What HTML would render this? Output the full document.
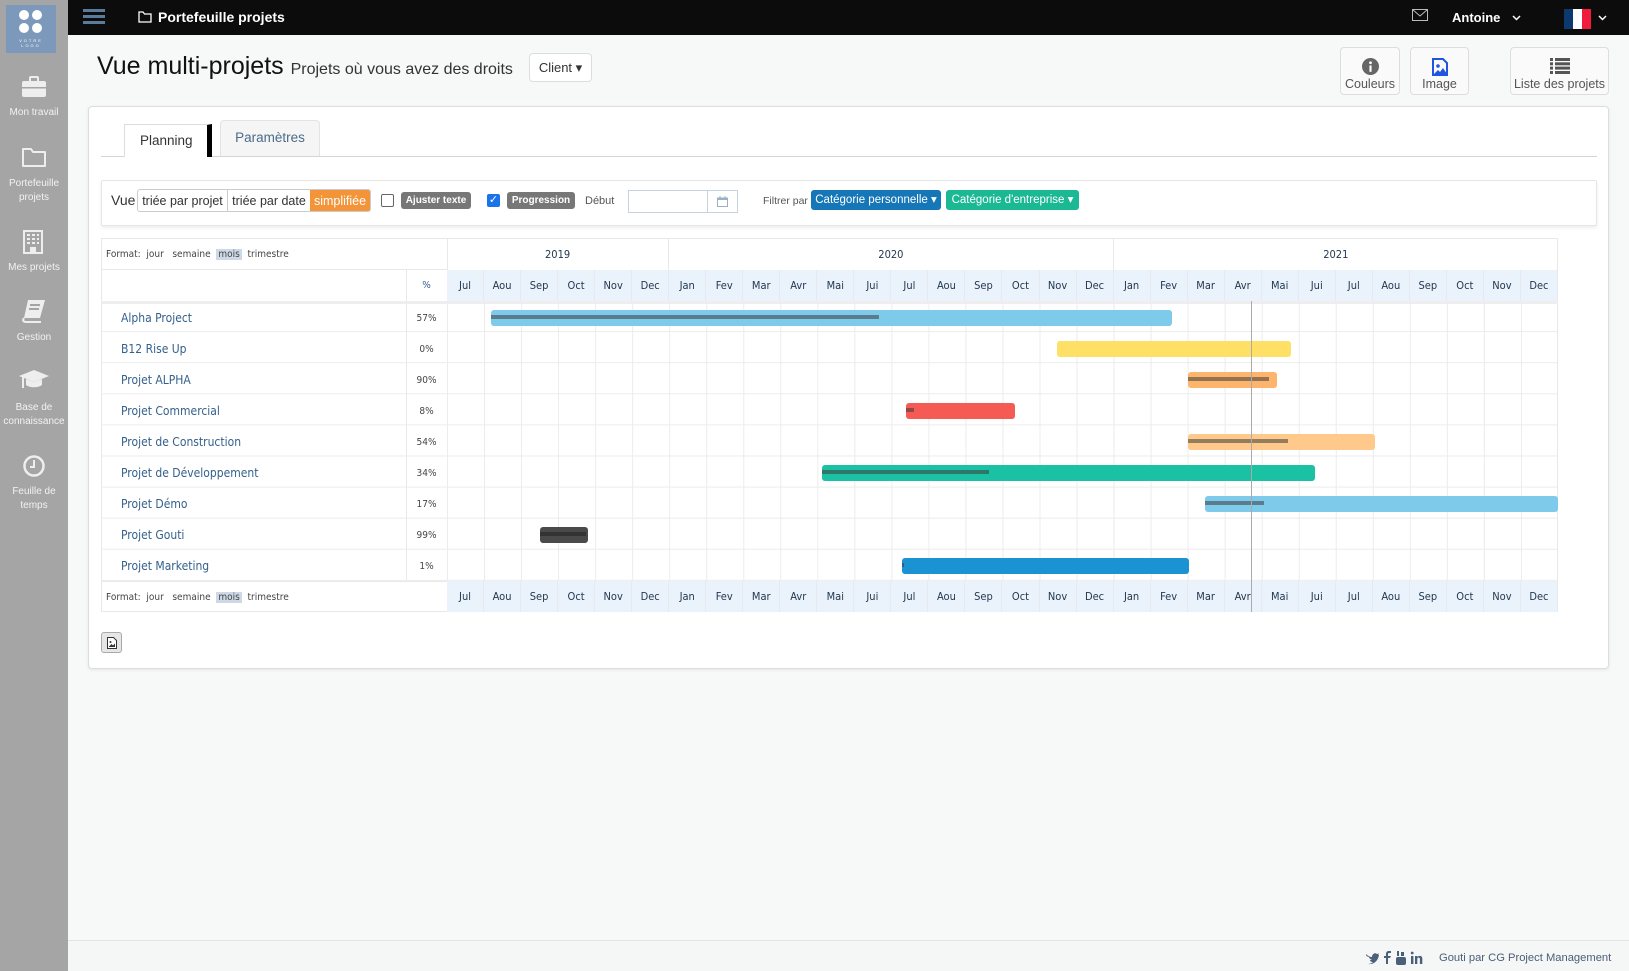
<!DOCTYPE html>
<html><head><meta charset="utf-8">
<style>
*{box-sizing:border-box;margin:0;padding:0}
body{width:1629px;height:971px;overflow:hidden;background:#f7f8f8;font-family:"Liberation Sans",sans-serif;position:relative;color:#333}
.abs{position:absolute}
#side{left:0;top:0;width:68px;height:971px;background:#a5a5a5}
.sl{position:absolute;left:0;width:68px;text-align:center;color:#f2f2f2;font-size:10px;line-height:14px}
#top{left:68px;top:0;width:1561px;height:35px;background:#0c0c0c}
.btn{position:absolute;background:#fafafa;border:1px solid #ddd;border-radius:4px;text-align:center;font-size:12.5px;color:#555}
.gw{font-family:"DejaVu Sans Condensed","DejaVu Sans",sans-serif}
.mrow{position:absolute;left:447px;width:1111px;height:31px;display:flex;background:#eaf2fb}
.mrow span{width:37.033px;text-align:center;font-size:11px;line-height:31px;color:#23384f;border-right:1px solid #e4eaf0}
.name{position:absolute;left:121px;font-size:12px;color:#34608c;line-height:31px}
.pct{position:absolute;left:406px;width:41px;text-align:center;font-size:10px;color:#444;line-height:31px}
.bar{position:absolute;height:16px;border-radius:3px}
.pg{position:absolute;left:0;top:5px;height:4px;background:rgba(60,60,60,.55)}
.fmt{font-size:10px;color:#444}
.fmt b{font-weight:normal;background:#cdd9e6;padding:0 2px}
</style></head><body>

<div id="side" class="abs">
 <div class="abs" style="left:6px;top:5px;width:50px;height:48px;background:#7c98bb">
  <div class="abs" style="left:13px;top:5px;width:10px;height:10px;border-radius:50%;background:#fff"></div>
  <div class="abs" style="left:26px;top:5px;width:10px;height:10px;border-radius:50%;background:#fff"></div>
  <div class="abs" style="left:13px;top:18px;width:10px;height:10px;border-radius:50%;background:#fff"></div>
  <div class="abs" style="left:26px;top:18px;width:10px;height:10px;border-radius:50%;background:#fff"></div>
  <div class="abs" style="left:0;top:33px;width:50px;text-align:center;font-size:4px;color:#fff;letter-spacing:2px;line-height:5px">VOTRE<br>LOGO</div>
 </div>
 <svg class="abs" style="left:21px;top:76px" width="26" height="22" viewBox="0 0 26 22"><rect x="1" y="5" width="24" height="16" rx="2" fill="#eee"/><rect x="9" y="1" width="8" height="5" rx="1" fill="none" stroke="#eee" stroke-width="2"/><rect x="1" y="11" width="24" height="1.5" fill="#a5a5a5"/></svg>
 <div class="sl" style="top:106px">Mon travail</div>
 <svg class="abs" style="left:21px;top:146px" width="26" height="22" viewBox="0 0 26 22"><path d="M2 3h8l2 3h12v14H2z" fill="none" stroke="#eee" stroke-width="2" stroke-linejoin="round"/></svg>
 <div class="sl" style="top:177px">Portefeuille<br>projets</div>
 <svg class="abs" style="left:23px;top:230px" width="20" height="24" viewBox="0 0 20 24"><rect x="1" y="1" width="18" height="22" fill="none" stroke="#eee" stroke-width="2"/><g fill="#eee"><rect x="4" y="4" width="3" height="2"/><rect x="9" y="4" width="3" height="2"/><rect x="14" y="4" width="2" height="2"/><rect x="4" y="8" width="3" height="2"/><rect x="9" y="8" width="3" height="2"/><rect x="14" y="8" width="2" height="2"/><rect x="4" y="12" width="3" height="2"/><rect x="9" y="12" width="3" height="2"/><rect x="14" y="12" width="2" height="2"/><rect x="7" y="17" width="6" height="6"/></g></svg>
 <div class="sl" style="top:261px">Mes projets</div>
 <svg class="abs" style="left:21px;top:299px" width="26" height="24" viewBox="0 0 26 24"><path d="M7 1h17l-5 18H3z" fill="#eee"/><path d="M3 19c-2 3 0 4 2 4h15" fill="none" stroke="#eee" stroke-width="2"/><rect x="9" y="5" width="10" height="2" fill="#a5a5a5"/><rect x="8" y="9" width="10" height="2" fill="#a5a5a5"/></svg>
 <div class="sl" style="top:331px">Gestion</div>
 <svg class="abs" style="left:18px;top:368px" width="32" height="24" viewBox="0 0 32 24"><path d="M1 8L16 2l15 6-15 6z" fill="#eee"/><path d="M8 11v6c4 3 12 3 16 0v-6l-8 3z" fill="#eee"/><path d="M5 9v11" stroke="#eee" stroke-width="2"/></svg>
 <div class="sl" style="top:401px">Base de<br>connaissance</div>
 <svg class="abs" style="left:22px;top:454px" width="24" height="24" viewBox="0 0 24 24"><circle cx="12" cy="12" r="9.5" fill="none" stroke="#eee" stroke-width="2.5"/><path d="M12 6v7h-4" fill="none" stroke="#eee" stroke-width="2"/></svg>
 <div class="sl" style="top:485px">Feuille de<br>temps</div>
</div>

<div id="top" class="abs">
 <div class="abs" style="left:15px;top:9px;width:22px;height:3px;background:#5b7b9b;box-shadow:0 6px 0 #5b7b9b,0 12px 0 #5b7b9b"></div>
 <svg class="abs" style="left:70px;top:11px" width="14" height="12" viewBox="0 0 14 12"><path d="M1 1h4l1.5 2H13v8H1z" fill="none" stroke="#fff" stroke-width="1.3"/></svg>
 <div class="abs" style="left:90px;top:9px;color:#fff;font-weight:bold;font-size:14px">Portefeuille projets</div>
 <svg class="abs" style="left:1344px;top:9px" width="16" height="12" viewBox="0 0 16 12"><rect x=".5" y=".5" width="15" height="11" fill="none" stroke="#bbb"/><path d="M.5 .5L8 7l7.5-6.5" fill="none" stroke="#bbb"/></svg>
 <div class="abs" style="left:1384px;top:10px;color:#fff;font-weight:bold;font-size:13px">Antoine</div>
 <svg class="abs" style="left:1444px;top:15px" width="9" height="6" viewBox="0 0 9 6"><path d="M1 1l3.5 3.5L8 1" fill="none" stroke="#fff" stroke-width="1.5"/></svg>
 <div class="abs" style="left:1496px;top:9px;width:27px;height:20px;background:linear-gradient(90deg,#0d3a6e 33%,#fff 33%,#fff 66%,#ef1c3c 66%)"></div>
 <svg class="abs" style="left:1530px;top:15px" width="9" height="6" viewBox="0 0 9 6"><path d="M1 1l3.5 3.5L8 1" fill="none" stroke="#fff" stroke-width="1.5"/></svg>
</div>

<div class="abs" style="left:97px;top:52px;font-size:25px;color:#111">Vue multi-projets <span style="font-size:16px;color:#333">Projets où vous avez des droits</span></div>
<div class="btn" style="left:529px;top:53px;width:63px;height:29px;background:#fff;line-height:27px;color:#333;font-size:13px">Client &#9662;</div>

<div class="btn" style="left:1340px;top:47px;width:60px;height:48px">
 <svg style="margin-top:10px" width="17" height="17" viewBox="0 0 16 16"><circle cx="8" cy="8" r="8" fill="#666"/><rect x="7" y="7" width="2" height="6" fill="#fff"/><circle cx="8" cy="4.5" r="1.3" fill="#fff"/></svg>
 <div style="margin-top:-1px">Couleurs</div></div>
<div class="btn" style="left:1410px;top:47px;width:59px;height:48px">
 <svg style="margin-top:10px" width="16" height="18" viewBox="0 0 16 18"><path d="M1 1h10l4 4v12H1z" fill="none" stroke="#1f55e0" stroke-width="2"/><circle cx="6" cy="8" r="1.8" fill="#1f55e0"/><path d="M2 16l4-4 2 2 3-4 4 6z" fill="#1f55e0"/></svg>
 <div style="margin-top:-2px">Image</div></div>
<div class="btn" style="left:1510px;top:47px;width:99px;height:48px">
 <svg style="margin-top:10px" width="20" height="16" viewBox="0 0 20 16"><g fill="#555"><rect x="0" y="0" width="3" height="3"/><rect x="5" y="0" width="15" height="3"/><rect x="0" y="4.3" width="3" height="3"/><rect x="5" y="4.3" width="15" height="3"/><rect x="0" y="8.6" width="3" height="3"/><rect x="5" y="8.6" width="15" height="3"/><rect x="0" y="13" width="3" height="3"/><rect x="5" y="13" width="15" height="3"/></g></svg>
 <div style="margin-top:0px">Liste des projets</div></div>

<div class="abs" style="left:88px;top:106px;width:1521px;height:563px;background:#fff;border:1px solid #ddd;border-radius:4px;box-shadow:0 1px 3px rgba(0,0,0,.08)"></div>
<div class="abs" style="left:101px;top:156px;width:1496px;height:1px;background:#d5d5d5"></div>
<div class="abs" style="left:124px;top:124px;width:88px;height:33px;background:#fff;border:1px solid #ddd;border-bottom:none;border-right:5px solid #000;font-size:13.5px;line-height:32px;padding-left:15px;color:#333">Planning</div>
<div class="abs" style="left:220px;top:120px;width:100px;height:36px;background:#f5f5f5;border:1px solid #e3e3e3;border-bottom:none;border-radius:4px 4px 0 0;font-size:13.5px;line-height:34px;text-align:center;color:#4a6b8a">Paramètres</div>

<div class="abs" style="left:101px;top:180px;width:1496px;height:46px;background:#fff;border:1px solid #e6e6e6;border-radius:2px;box-shadow:0 2px 3px rgba(0,0,0,.07)"></div>
<div class="abs" style="left:111px;top:192px;font-size:14px;color:#333">Vue</div>
<div class="abs" style="left:137px;top:189px;width:234px;height:23px;border:1px solid #ccc;border-radius:3px;display:flex;font-size:12.5px;line-height:22px;background:#fff;overflow:hidden">
 <div style="width:90px;text-align:center;border-right:1px solid #ccc">triée par projet</div>
 <div style="width:82px;text-align:center">triée par date</div>
 <div style="flex:1;text-align:center;background:#f29437;color:#fff">simplifiée</div>
</div>
<div class="abs" style="left:381px;top:194px;width:13px;height:13px;border:1px solid #666;border-radius:2px;background:#fff"></div>
<div class="abs" style="left:401px;top:192px;width:70px;height:17px;background:#777;border-radius:3px;color:#fff;font-size:10px;font-weight:bold;text-align:center;line-height:17px">Ajuster texte</div>
<div class="abs" style="left:487px;top:194px;width:13px;height:13px;border-radius:2px;background:#1a73e8;color:#fff;font-size:11px;line-height:13px;text-align:center">✓</div>
<div class="abs" style="left:507px;top:192px;width:68px;height:17px;background:#777;border-radius:3px;color:#fff;font-size:10px;font-weight:bold;text-align:center;line-height:17px">Progression</div>
<div class="abs" style="left:585px;top:195px;font-size:11px;color:#555">Début</div>
<div class="abs" style="left:628px;top:190px;width:110px;height:23px;border:1px solid #c8d3df;background:#fff"><div class="abs" style="left:78px;top:0;width:1px;height:21px;background:#c8d3df"></div>
 <svg class="abs" style="left:88px;top:5px" width="11" height="11" viewBox="0 0 11 11"><rect x=".5" y="2" width="10" height="8.5" fill="none" stroke="#9bb0c6"/><rect x=".5" y="2" width="10" height="2" fill="#9bb0c6"/><rect x="2.5" y="0" width="1" height="3" fill="#9bb0c6"/><rect x="7.5" y="0" width="1" height="3" fill="#9bb0c6"/></svg></div>
<div class="abs" style="left:763px;top:195px;font-size:10.5px;color:#555">Filtrer par</div>
<div class="abs" style="left:811px;top:190px;width:130px;height:20px;background:#1677b8;border-radius:3px;color:#fff;font-size:11.5px;line-height:20px;text-align:center">Catégorie personnelle &#9662;</div>
<div class="abs" style="left:946px;top:190px;width:133px;height:20px;background:#1bb894;border-radius:3px;color:#fff;font-size:11.5px;line-height:20px;text-align:center">Catégorie d'entreprise &#9662;</div>

<!-- Gantt -->
<div class="gw">
<div class="abs" style="left:101px;top:238px;width:1457px;height:374px;border:1px solid #e8e8e8;background:#fff"></div>
<div class="abs" style="left:447px;top:238px;width:1px;height:374px;background:#e8e8e8"></div>
<div class="abs" style="left:406px;top:269px;width:1px;height:311px;background:#e8e8e8"></div>
<div class="abs" style="left:101px;top:269px;width:346px;height:1px;background:#e8e8e8"></div>
<div class="abs fmt" style="left:106px;top:249px">Format:&nbsp; jour &nbsp; semaine &nbsp;<b>mois</b>&nbsp; trimestre</div>
<div class="abs" style="left:447px;top:239px;width:1111px;height:31px;display:flex;font-size:11px;line-height:31px;color:#23384f;text-align:center">
 <div style="width:222.2px;border-right:1px solid #e8e8e8">2019</div>
 <div style="width:444.4px;border-right:1px solid #e8e8e8">2020</div>
 <div style="flex:1">2021</div>
</div>
<div class="pct" style="top:270px;color:#34608c">%</div>
<div class="mrow" style="top:270px"><span>Jul</span><span>Aou</span><span>Sep</span><span>Oct</span><span>Nov</span><span>Dec</span><span>Jan</span><span>Fev</span><span>Mar</span><span>Avr</span><span>Mai</span><span>Jui</span><span>Jul</span><span>Aou</span><span>Sep</span><span>Oct</span><span>Nov</span><span>Dec</span><span>Jan</span><span>Fev</span><span>Mar</span><span>Avr</span><span>Mai</span><span>Jui</span><span>Jul</span><span>Aou</span><span>Sep</span><span>Oct</span><span>Nov</span><span>Dec</span></div>
<div class="abs" style="left:101px;top:301px;width:1457px;height:3px;background:#eee"></div>
<div class="abs" style="left:447px;top:301px;width:1111px;height:280px;background-image:linear-gradient(to right,#ececec 1px,transparent 1px);background-size:37.033px 100%"></div>
<div class="abs" style="left:101px;top:301px;width:1457px;height:280px;background-image:linear-gradient(to bottom,transparent 30px,#ececec 30px);background-size:100% 31.1px"></div>

<div class="name" style="top:303px">Alpha Project</div><div class="pct" style="top:303px">57%</div>
<div class="name" style="top:334px">B12 Rise Up</div><div class="pct" style="top:334px">0%</div>
<div class="name" style="top:365px">Projet ALPHA</div><div class="pct" style="top:365px">90%</div>
<div class="name" style="top:396px">Projet Commercial</div><div class="pct" style="top:396px">8%</div>
<div class="name" style="top:427px">Projet de Construction</div><div class="pct" style="top:427px">54%</div>
<div class="name" style="top:458px">Projet de Développement</div><div class="pct" style="top:458px">34%</div>
<div class="name" style="top:489px">Projet Démo</div><div class="pct" style="top:489px">17%</div>
<div class="name" style="top:520px">Projet Gouti</div><div class="pct" style="top:520px">99%</div>
<div class="name" style="top:551px">Projet Marketing</div><div class="pct" style="top:551px">1%</div>

<div class="bar" style="left:491px;top:310px;width:681px;background:#7ecaeb"><div class="pg" style="width:388px"></div></div>
<div class="bar" style="left:1057px;top:341px;width:234px;background:#ffe066"></div>
<div class="bar" style="left:1188px;top:372px;width:89px;background:#fdb46c"><div class="pg" style="width:81px"></div></div>
<div class="bar" style="left:906px;top:403px;width:109px;background:#f65a55"><div class="pg" style="width:8px"></div></div>
<div class="bar" style="left:1188px;top:434px;width:187px;background:#fec98b"><div class="pg" style="width:100px"></div></div>
<div class="bar" style="left:822px;top:465px;width:493px;background:#1bc1a3"><div class="pg" style="width:167px"></div></div>
<div class="bar" style="left:1205px;top:496px;width:353px;background:#7ecaeb"><div class="pg" style="width:59px"></div></div>
<div class="bar" style="left:540px;top:527px;width:48px;background:#4a4a4a"><div class="pg" style="width:46px;background:#333"></div></div>
<div class="bar" style="left:902px;top:558px;width:287px;background:#1b92d2"><div class="pg" style="width:2px"></div></div>

<div class="abs" style="left:101px;top:581px;width:346px;height:1px;background:#e8e8e8"></div>
<div class="abs fmt" style="left:106px;top:592px">Format:&nbsp; jour &nbsp; semaine &nbsp;<b>mois</b>&nbsp; trimestre</div>
<div class="mrow" style="top:581px"><span>Jul</span><span>Aou</span><span>Sep</span><span>Oct</span><span>Nov</span><span>Dec</span><span>Jan</span><span>Fev</span><span>Mar</span><span>Avr</span><span>Mai</span><span>Jui</span><span>Jul</span><span>Aou</span><span>Sep</span><span>Oct</span><span>Nov</span><span>Dec</span><span>Jan</span><span>Fev</span><span>Mar</span><span>Avr</span><span>Mai</span><span>Jui</span><span>Jul</span><span>Aou</span><span>Sep</span><span>Oct</span><span>Nov</span><span>Dec</span></div>
<div class="abs" style="left:1251px;top:301px;width:1px;height:311px;background:#aaa"></div>
</div>

<div class="abs" style="left:101px;top:632px;width:21px;height:21px;border:1px solid #aaa;border-radius:3px;background:#e6e6e6">
 <svg class="abs" style="left:5px;top:4px" width="10" height="12" viewBox="0 0 10 12"><path d="M.5 .5h6l3 3v8H.5z" fill="#fff" stroke="#333"/><path d="M1.5 10l3-3 1.5 1.5 2-2v3.5z" fill="#333"/><circle cx="3.5" cy="5" r="1" fill="#333"/></svg></div>

<div class="abs" style="left:68px;top:940px;width:1561px;height:31px;background:#f5f6f6;border-top:1px solid #e3e3e3"></div>
<svg class="abs" style="left:1366px;top:951px" width="62" height="14" viewBox="0 0 62 14">
 <path d="M0 3c2 2 4 3 6 3 0-3 3-5 5-3 1 0 2-1 2-1l-1 2c1 0 1-1 1-1 0 5-4 11-11 10 2 0 4-1 5-2-2 0-3-1-3-2h2c-2-1-3-2-3-3l2 0C1 6 0 5 0 3z" fill="#4a6078"/>
 <path d="M20 13V7h-2V5h2V3c0-2 1-3 3-3h2v2h-1c-1 0-2 0-2 1v2h3l-1 2h-2v6z" fill="#4a6078"/>
 <rect x="31" y="0" width="2" height="5" fill="#4a6078"/><rect x="35" y="1" width="3" height="4" fill="#4a6078"/><rect x="30" y="6" width="10" height="8" rx="2" fill="#4a6078"/>
 <rect x="45" y="5" width="2.4" height="8" fill="#4a6078"/><circle cx="46.2" cy="2" r="1.4" fill="#4a6078"/><path d="M49 13V5h2.3v1c1-1.5 5-2 5 1.5V13h-2.4V8c0-2-2.6-2-2.6 0v5z" fill="#4a6078"/>
</svg>
<div class="abs" style="left:1439px;top:952px;font-size:11.2px;color:#4a6078">Gouti par CG Project Management</div>
</body></html>
